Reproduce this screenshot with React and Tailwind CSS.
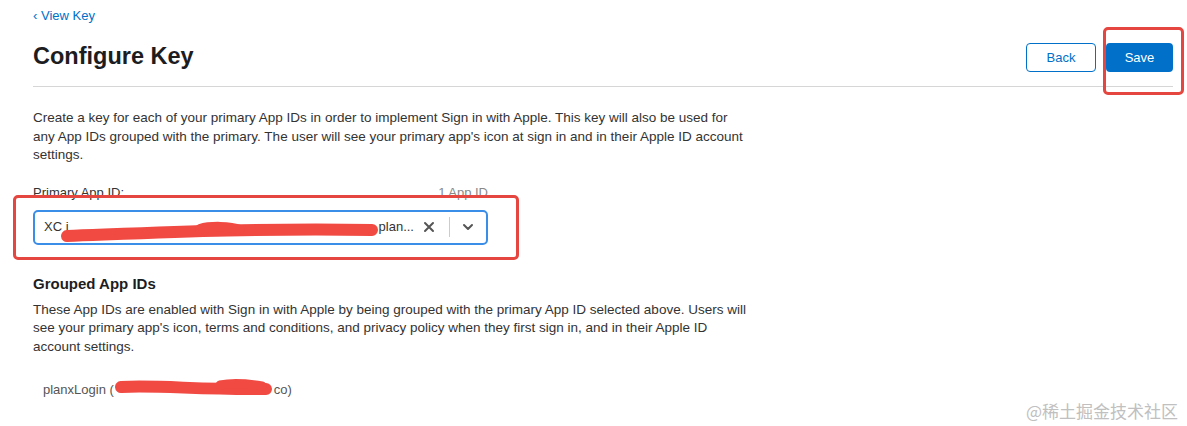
import React from "react";

export default function App() {
  return (
    <div className="relative w-[1187px] h-[426px] bg-white overflow-hidden text-[#333]" style={{ fontFamily: '"Liberation Sans", Arial, sans-serif' }}>
      <div className="pl-[33px] pr-[14px] pt-[8px]">
        <a className="text-[13px] text-[#0070c9] leading-[16px] block">‹ View Key</a>
        <div className="flex items-start justify-between mt-[19px] pb-[14px] border-b border-[#d6d6d6]">
          <h1 className="text-[23.5px] font-bold text-[#1d1d1f] leading-[28px] mt-[-1px]">Configure Key</h1>
          <div className="flex gap-[10px] mt-[0px]">
            <button className="w-[70px] h-[29px] rounded-[4px] border border-[#0070c9] text-[#0070c9] text-[13px] bg-white">Back</button>
            <button className="w-[67px] h-[29px] rounded-[4px] bg-[#0070c9] text-white text-[13px]">Save</button>
          </div>
        </div>
        <div className="w-[760px]">
          <p className="mt-[22px] text-[13.5px] leading-[18.5px] text-[#333]">
            Create a key for each of your primary App IDs in order to implement Sign in with Apple. This key will also be used for<br />
            any App IDs grouped with the primary. The user will see your primary app's icon at sign in and in their Apple ID account<br />
            settings.
          </p>
          <div className="w-[455px] mt-[20px]">
            <div className="flex justify-between items-end text-[13px] leading-[16px]">
              <span className="text-[#333]">Primary App ID:</span>
              <span className="text-[#888]">1 App ID</span>
            </div>
            <div className="mt-[9px] h-[35px] border-2 border-[#3b8ee8] rounded-[5px] flex items-center pl-[9px]">
              <span className="flex-1 text-[13px] text-[#333]">XC i<span className="inline-block w-[310px]"></span>plan...</span>
              <svg width="14" height="14" viewBox="0 0 14 14" className="mr-[13px]">
                <path d="M3 3 L11 11 M11 3 L3 11" stroke="#555" strokeWidth="2" strokeLinecap="round" />
              </svg>
              <div className="w-px h-[20px] bg-[#ccc]"></div>
              <svg width="14" height="14" viewBox="0 0 14 14" className="mx-[11px]">
                <path d="M3 5 L7 9 L11 5" stroke="#555" strokeWidth="2" fill="none" strokeLinecap="round" strokeLinejoin="round" />
              </svg>
            </div>
          </div>
          <h2 className="mt-[30px] text-[15px] font-semibold text-[#1d1d1f] leading-[18px]">Grouped App IDs</h2>
          <p className="mt-[8px] text-[13.5px] leading-[18.5px] text-[#333]">
            These App IDs are enabled with Sign in with Apple by being grouped with the primary App ID selected above. Users will<br />
            see your primary app's icon, terms and conditions, and privacy policy when they first sign in, and in their Apple ID<br />
            account settings.
          </p>
          <div className="mt-[26px] pl-[10px] text-[13px] text-[#555] leading-[16px]">
            planxLogin (<span className="inline-block w-[160px]"></span>co)
          </div>
        </div>
      </div>

      {/* annotations */}
      <div className="absolute left-[1103px] top-[27px] w-[81px] h-[68px] border-[3px] border-[#e5463f] rounded-[5px]"></div>
      <div className="absolute left-[13px] top-[195px] w-[506px] h-[65px] border-[3px] border-[#e5463f] rounded-[5px]"></div>
      <svg className="absolute left-0 top-0" width="1187" height="426">
        <path d="M67 236 C 150 233, 250 228, 372 230" stroke="#f04a43" strokeWidth="12" strokeLinecap="round" fill="none" />
        <path d="M200 229 C 210 226, 230 226, 240 230" stroke="#f04a43" strokeWidth="10" strokeLinecap="round" fill="none" />
        <path d="M121 387 C 160 385, 200 390, 266 389" stroke="#f04a43" strokeWidth="12" strokeLinecap="round" fill="none" />
        <path d="M220 385 C 235 382, 250 384, 262 386" stroke="#f04a43" strokeWidth="9" strokeLinecap="round" fill="none" />
      </svg>
      <div className="absolute right-[9px] top-[398px] text-[17px] text-[#c0c0c0]" style={{ fontFamily: '"Noto Sans CJK SC", sans-serif' }}>@稀土掘金技术社区</div>
    </div>
  );
}
